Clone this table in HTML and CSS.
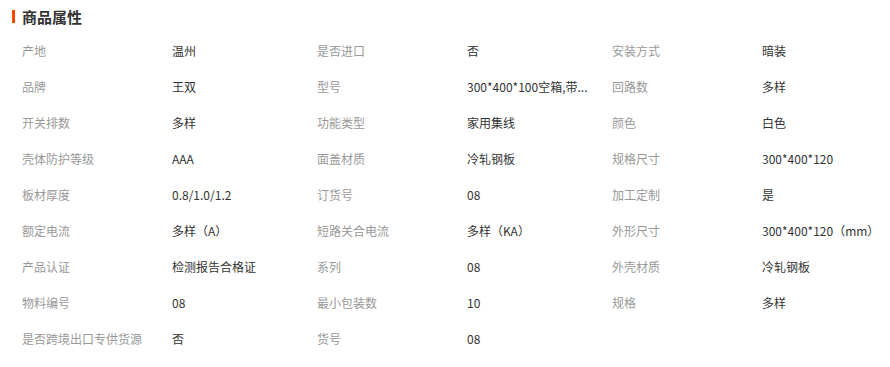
FILE: index.html
```html
<!DOCTYPE html>
<html lang="zh">
<head>
<meta charset="utf-8">
<link rel="stylesheet" href="styles.css">
</head>
<body>
<div class="attrs">
  <h2 class="title"><span class="bar"></span>商品属性</h2>
  <div class="grid">
    <div class="k">产地</div><div class="v">温州</div>
    <div class="k">是否进口</div><div class="v">否</div>
    <div class="k">安装方式</div><div class="v">暗装</div>

    <div class="k">品牌</div><div class="v">王双</div>
    <div class="k">型号</div><div class="v" title="300*400*100空箱,带门,带锁,带底板">300*400*100空箱,带...</div>
    <div class="k">回路数</div><div class="v">多样</div>

    <div class="k">开关排数</div><div class="v">多样</div>
    <div class="k">功能类型</div><div class="v">家用集线</div>
    <div class="k">颜色</div><div class="v">白色</div>

    <div class="k">壳体防护等级</div><div class="v">AAA</div>
    <div class="k">面盖材质</div><div class="v">冷轧钢板</div>
    <div class="k">规格尺寸</div><div class="v">300*400*120</div>

    <div class="k">板材厚度</div><div class="v">0.8/1.0/1.2</div>
    <div class="k">订货号</div><div class="v">08</div>
    <div class="k">加工定制</div><div class="v">是</div>

    <div class="k">额定电流</div><div class="v">多样（A）</div>
    <div class="k">短路关合电流</div><div class="v">多样（KA）</div>
    <div class="k">外形尺寸</div><div class="v">300*400*120（mm）</div>

    <div class="k">产品认证</div><div class="v">检测报告合格证</div>
    <div class="k">系列</div><div class="v">08</div>
    <div class="k">外壳材质</div><div class="v">冷轧钢板</div>

    <div class="k">物料编号</div><div class="v">08</div>
    <div class="k">最小包装数</div><div class="v">10</div>
    <div class="k">规格</div><div class="v">多样</div>

    <div class="k">是否跨境出口专供货源</div><div class="v">否</div>
    <div class="k">货号</div><div class="v">08</div>
  </div>
</div>
</body>
</html>
```

FILE: styles.css
```css
html, body {
  margin: 0;
  padding: 0;
  background: #fff;
}
body {
  font-family: "Noto Sans CJK SC", "Liberation Sans", sans-serif;
  font-size: 12px;
  color: #333;
}
.attrs {
  width: 890px;
}
.title {
  display: flex;
  align-items: center;
  height: 33px;
  margin: 0;
  padding-left: 12px;
  font-size: 15px;
  font-weight: bold;
  color: #333;
  line-height: 33px;
}
.bar {
  display: block;
  width: 3px;
  height: 13px;
  background: #ff4400;
  margin-right: 7px;
}
.grid {
  display: grid;
  grid-template-columns: 150px 145px 150px 145px 150px 1fr;
  padding-left: 22px;
}
.k, .v {
  height: 36px;
  line-height: 36px;
  white-space: nowrap;
}
.k {
  color: #999;
}
.v {
  color: #333;
}
```
